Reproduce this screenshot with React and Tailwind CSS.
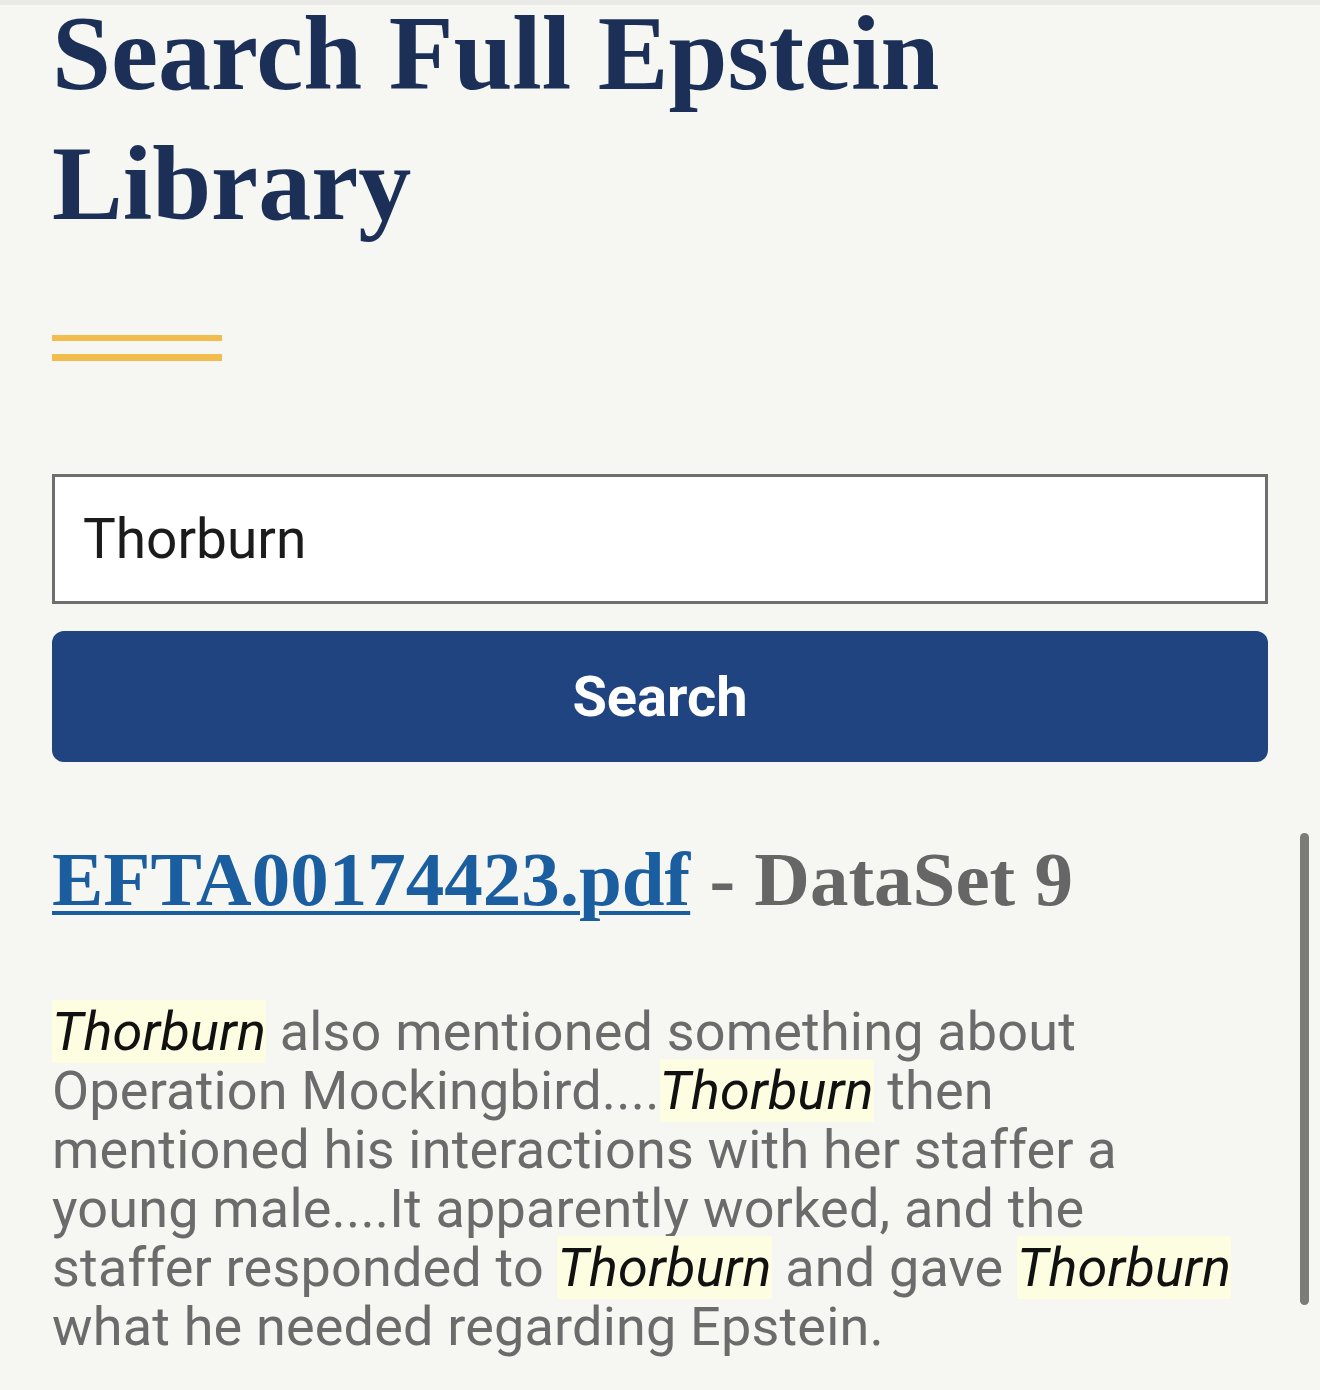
import React from 'react';

const serif = { fontFamily: '"Liberation Serif", "Times New Roman", serif' };

const Hit = ({ children }) => (
  <em className="italic text-[#111111] bg-[#fdfde2]">{children}</em>
);

const App = () => {
  return (
    <div className="relative min-h-screen bg-[#f6f6f3] overflow-hidden font-['Roboto',sans-serif]">
      {/* top edge of the sticky header */}
      <div className="h-[5px] bg-[#e9e9e6]" />

      <div className="px-[52px]">
        <h1
          className="mt-[-16px] text-[106px] leading-[130px] font-bold text-[#1b2f57]"
          style={serif}
        >
          Search Full Epstein Library
        </h1>

        {/* gold double rule */}
        <div className="mt-[86px] flex flex-col gap-[13px] w-[170px]">
          <div className="h-[6px] bg-[#f2bd4e]" />
          <div className="h-[7px] bg-[#f2bd4e]" />
        </div>

        {/* search form */}
        <form className="mt-[113px] flex flex-col gap-[27px]" onSubmit={(e) => e.preventDefault()}>
          <input
            type="text"
            defaultValue="Thorburn"
            className="h-[130px] w-full bg-white border-[3px] border-[#6e6e6e] pl-[28px] text-[55px] text-[#1b1b1b] outline-none"
          />
          <button
            type="submit"
            className="h-[131px] w-full rounded-[12px] bg-[#1f4480] text-white text-[56px] font-bold"
          >
            Search
          </button>
        </form>

        {/* result */}
        <h3 className="mt-[72px] text-[77px] leading-[91px] font-bold text-[#666666]" style={serif}>
          <a
            href="#"
            className="text-[#1b5e9f] underline decoration-[4px] underline-offset-[6px]"
          >
            EFTA00174423.pdf
          </a>{' '}
          - DataSet 9
        </h3>

        <p className="mt-[77px] pr-[13px] text-[54px] leading-[59px] tracking-[0.18px] text-[#6b6b6b]">
          <Hit>Thorburn</Hit> also mentioned something about Operation Mockingbird....
          <Hit>Thorburn</Hit> then mentioned his interactions with her staffer a young
          male....It apparently worked, and the staffer responded to <Hit>Thorburn</Hit> and
          gave <Hit>Thorburn</Hit> what he needed regarding Epstein.
        </p>
      </div>

      {/* overlay scrollbar */}
      <div className="absolute left-[1300px] top-[833px] w-[9px] h-[472px] rounded-full bg-[#7b7b77]" />
    </div>
  );
};

export default App;
